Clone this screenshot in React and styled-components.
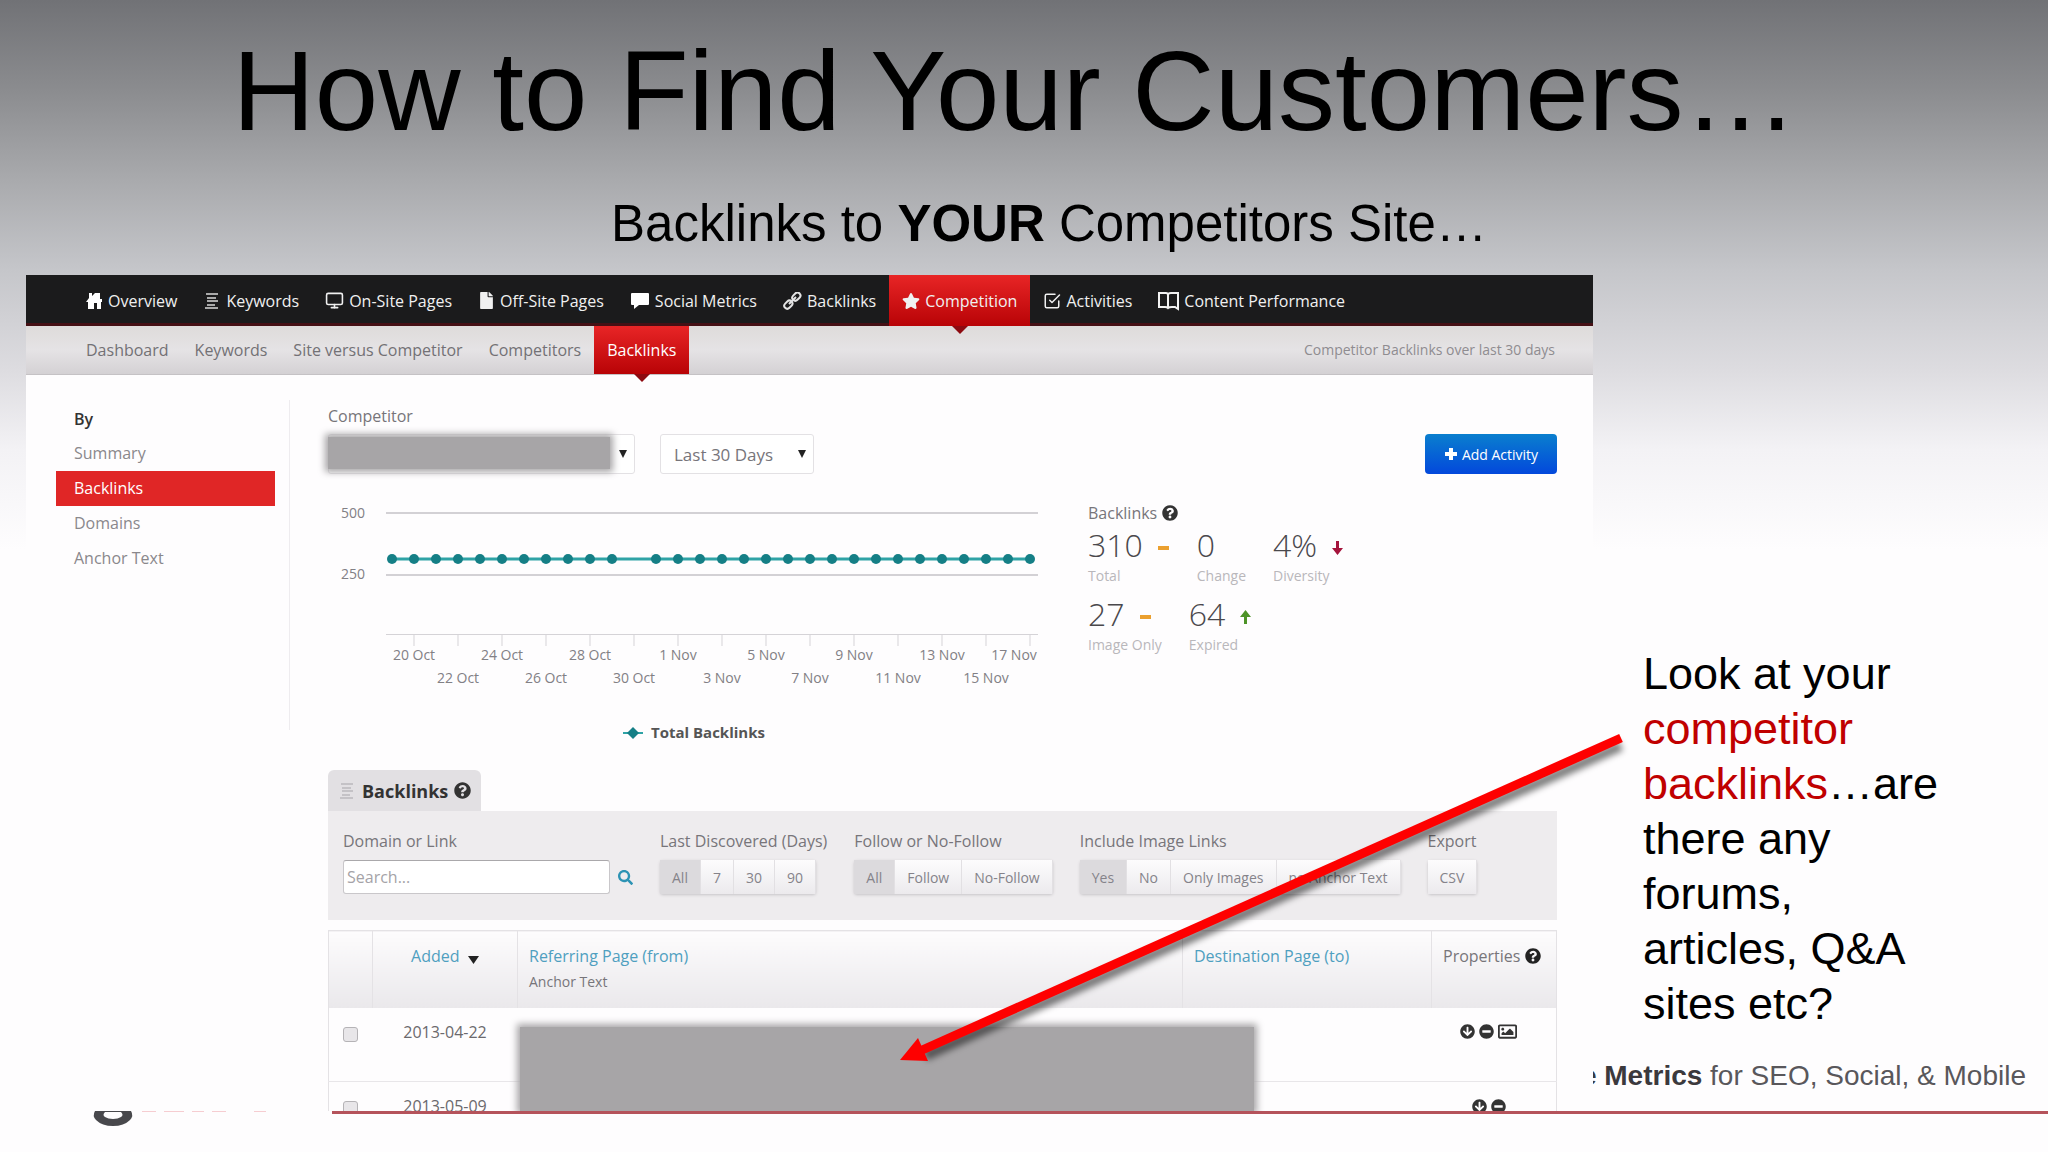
import React from "react";
import styled, { createGlobalStyle, css } from "styled-components";
import {
  FaFile,
  FaStar,
  FaSearch,
  FaQuestionCircle,
  FaArrowCircleDown,
  FaMinusCircle,
  FaRegImage,
} from "react-icons/fa";
import { FiMonitor, FiCheckSquare } from "react-icons/fi";

const NAV = [
  { label: "Overview", icon: <HouseIcon /> },
  { label: "Keywords", icon: <LinesIcon /> },
  { label: "On-Site Pages", icon: <FiMonitor size={19} strokeWidth={2} /> },
  { label: "Off-Site Pages", icon: <FaFile size={17} /> },
  { label: "Social Metrics", icon: <BubbleIcon /> },
  { label: "Backlinks", icon: <ChainIcon /> },
  { label: "Competition", icon: <FaStar size={18} />, active: true },
  { label: "Activities", icon: <FiCheckSquare size={18} /> },
  { label: "Content Performance", icon: <BookIcon /> },
];

const SUBNAV = ["Dashboard", "Keywords", "Site versus Competitor", "Competitors", "Backlinks"];
const SIDE = ["Summary", "Backlinks", "Domains", "Anchor Text"];

const FILTERS = [
  { label: "Last Discovered (Days)", options: ["All", "7", "30", "90"] },
  { label: "Follow or No-Follow", options: ["All", "Follow", "No-Follow"] },
  { label: "Include Image Links", options: ["Yes", "No", "Only Images", "no Anchor Text"] },
];

const DATES = [
  "20 Oct", "22 Oct", "24 Oct", "26 Oct", "28 Oct", "30 Oct", "1 Nov", "3 Nov",
  "5 Nov", "7 Nov", "9 Nov", "11 Nov", "13 Nov", "15 Nov", "17 Nov",
];

const TRENDS = {
  flat: { color: "#eba02f", d: "M1 6h11v4H1z" },
  down: { color: "#a5143c", d: "M5 1h3v7h4l-5.500 7L1 8h4z" },
  up: { color: "#4d9327", d: "M5 15h3V8h4L6.500 1 1 8h4z" },
};

function HouseIcon() {
  return (
    <svg width="17" height="18" viewBox="0 0 17 18" fill="#fff" aria-hidden="true">
      <path d="M3 1h3v3l3-3h5v6h2v3h-1v7h-4v-6H8v6H2v-7H0l3-4z" />
    </svg>
  );
}

function LinesIcon({ color = "#a9a9a9" }) {
  return (
    <svg width="18" height="18" viewBox="0 0 18 18" fill={color} aria-hidden="true">
      <path d="M3 1h12v2H3zM4 5h9v2H4zM4 8h11v2H4zM4 12h8v2H4zM2 15h13v2H2z" />
    </svg>
  );
}

function BubbleIcon() {
  return (
    <svg width="20" height="18" viewBox="0 0 20 18" fill="#fff" aria-hidden="true">
      <path d="M2 1h16q1 0 1 1v10q0 1-1 1h-9l-5 4v-4H2q-1 0-1-1V2q0-1 1-1z" />
    </svg>
  );
}

function ChainIcon() {
  return (
    <svg width="19" height="18" viewBox="0 0 19 18" fill="none" stroke="#e4e4e4" strokeWidth="2" aria-hidden="true">
      <rect x="9" y="2" width="9" height="6" rx="3" transform="rotate(-45 13 5)" />
      <rect x="1" y="10" width="9" height="6" rx="3" transform="rotate(-45 5 13)" />
      <path d="M6 12l7-7" />
    </svg>
  );
}

function BookIcon() {
  return (
    <svg width="21" height="20" viewBox="0 0 21 20" fill="none" stroke="#f2f2f2" strokeWidth="2" aria-hidden="true">
      <path d="M1 2h7q2 0 2 2 0-2 3-2h7v16l-3-2h-3q-3 0-4 1-1-1-3-1H1zM10 4v13" />
    </svg>
  );
}

function PlusIcon() {
  return (
    <svg width="14" height="14" viewBox="0 0 14 14" fill="#fff" aria-hidden="true">
      <path d="M5 1h4v4h4v4H9v4H5V9H1V5h4z" />
    </svg>
  );
}

function CaretIcon({ size = 8 }) {
  return (
    <svg width={size} height="8" viewBox="0 0 8 8" preserveAspectRatio="none" fill="#222" aria-hidden="true">
      <path d="M0 0h8L4 8z" />
    </svg>
  );
}

function Chart() {
  const points = [...Array(30).keys()].filter((i) => i !== 11);
  return (
    <ChartSvg viewBox="0 0 760 262" role="img" aria-label="Total Backlinks">
      <g stroke="#d3d1d5" strokeWidth="2">
        <path d="M58 23H710M58 85H710" />
      </g>
      <path d="M58 144.500H710" stroke="#d5d3d7" />
      {DATES.map((d, i) => (
        <path key={d} d={`M${86 + i * 44} 144v12`} stroke="#d5d3d7" />
      ))}
      <text x="13" y="28">500</text>
      <text x="13" y="89">250</text>
      <path d="M64 69H702" stroke="#2fa3a6" strokeWidth="3" />
      {points.map((i) => (
        <circle key={i} cx={64 + i * 22} cy="69" r="5" fill="#157f86" />
      ))}
      {DATES.map((d, i) => (
        <text key={d} x={i === 14 ? 686 : 86 + i * 44} y={i % 2 ? 193 : 170} textAnchor="middle">
          {d}
        </text>
      ))}
      <path d="M295 243h20" stroke="#2fa3a6" strokeWidth="2" />
      <path d="M305 237l6 6-6 6-6-6z" fill="#157f86" />
      <LegendText x="323" y="248">Total Backlinks</LegendText>
    </ChartSvg>
  );
}

function Stat({ value, label, trend }) {
  return (
    <StatBox>
      <StatValue>
        {value}
        {trend && (
          <svg width="13" height="16" viewBox="0 0 13 16" fill={TRENDS[trend].color} aria-label={trend}>
            <path d={TRENDS[trend].d} />
          </svg>
        )}
      </StatValue>
      <StatLabel>{label}</StatLabel>
    </StatBox>
  );
}

function Dashboard() {
  return (
    <Panel>
      <NavBar>
        {NAV.map((n) => (
          <NavItem key={n.label} href="#" $active={n.active}>
            {n.icon}
            {n.label}
          </NavItem>
        ))}
      </NavBar>
      <SubNav>
        {SUBNAV.map((s) => (
          <SubItem key={s} href="#" $active={s === "Backlinks"}>{s}</SubItem>
        ))}
        <SubNote>Competitor Backlinks over last 30 days</SubNote>
      </SubNav>
      <Columns>
        <Sidebar>
          <SideTitle>By</SideTitle>
          {SIDE.map((s) => (
            <SideLink key={s} href="#" $active={s === "Backlinks"}>{s}</SideLink>
          ))}
        </Sidebar>
        <Content>
          <FieldLabel as="label" htmlFor="competitor">Competitor</FieldLabel>
          <Controls>
            <SelectWrap $width="307px">
              <Select id="competitor" />
              <CaretIcon />
              <HiddenName />
            </SelectWrap>
            <SelectWrap $width="154px">
              <Select aria-label="Period">
                <option>Last 30 Days</option>
              </Select>
              <CaretIcon />
            </SelectWrap>
            <AddButton type="button"><PlusIcon />Add Activity</AddButton>
          </Controls>
          <Overview>
            <Chart />
            <Stats>
              <StatsTitle>Backlinks <FaQuestionCircle size={16} color="#333" /></StatsTitle>
              <StatRow>
                <Stat value="310" label="Total" trend="flat" />
                <Stat value="0" label="Change" />
                <Stat value="4%" label="Diversity" trend="down" />
              </StatRow>
              <StatRow>
                <Stat value="27" label="Image Only" trend="flat" />
                <Stat value="64" label="Expired" trend="up" />
              </StatRow>
            </Stats>
          </Overview>
          <Tab><LinesIcon color="#c4c2c6" />Backlinks <FaQuestionCircle size={17} /></Tab>
          <Filters>
            <SearchGroup>
              <FieldLabel as="label" htmlFor="search">Domain or Link</FieldLabel>
              <SearchRow>
                <SearchInput id="search" placeholder="Search..." />
                <FaSearch size={15} color="#2d93b4" />
              </SearchRow>
            </SearchGroup>
            {FILTERS.map((f) => (
              <div key={f.label}>
                <FieldLabel>{f.label}</FieldLabel>
                <ButtonGroup role="group" aria-label={f.label}>
                  {f.options.map((o, i) => (
                    <SmallButton key={o} type="button" $on={i === 0}>{o}</SmallButton>
                  ))}
                </ButtonGroup>
              </div>
            ))}
            <div>
              <FieldLabel>Export</FieldLabel>
              <ButtonGroup><SmallButton type="button">CSV</SmallButton></ButtonGroup>
            </div>
          </Filters>
          <TableClip>
            <Table>
              <colgroup>
                <col style={{ width: 44 }} />
                <col style={{ width: 145 }} />
                <col />
                <col style={{ width: 249 }} />
                <col style={{ width: 125 }} />
              </colgroup>
              <thead>
                <tr>
                  <Th aria-label="Select" />
                  <Th $center><SortLink href="#">Added</SortLink>&nbsp; <CaretIcon size={11} /></Th>
                  <Th><SortLink href="#">Referring Page (from)</SortLink><Small>Anchor Text</Small></Th>
                  <Th><SortLink href="#">Destination Page (to)</SortLink></Th>
                  <Th>Properties <FaQuestionCircle size={16} color="#222" /></Th>
                </tr>
              </thead>
              <tbody>
                <tr>
                  <Td><Check type="checkbox" aria-label="Select 2013-04-22" /></Td>
                  <Td $center>2013-04-22</Td>
                  <Td />
                  <Td />
                  <Td>
                    <Props><FaArrowCircleDown /><FaMinusCircle /><FaRegImage size={19} /></Props>
                  </Td>
                </tr>
                <tr>
                  <Td><Check type="checkbox" aria-label="Select 2013-05-09" /></Td>
                  <Td $center>2013-05-09</Td>
                  <Td />
                  <Td />
                  <Td>
                    <Props><FaArrowCircleDown /><FaMinusCircle /></Props>
                  </Td>
                </tr>
              </tbody>
            </Table>
            <HiddenLinks />
          </TableClip>
        </Content>
      </Columns>
    </Panel>
  );
}

function App() {
  return (
    <Slide>
      <GlobalStyle />
      <Title>How to Find Your Customers…</Title>
      <Subtitle>Backlinks to <b>YOUR</b> Competitors Site…</Subtitle>
      <Board>
        <Dashboard />
        <Aside>
          <Callout>
            Look at your <em>competitor backlinks</em>…are there any forums, articles, Q&amp;A sites etc?
          </Callout>
          <Tagline><span><b>e Metrics</b> for SEO, Social, &amp; Mobile</span></Tagline>
        </Aside>
      </Board>
      <Footer>
        <svg width="180" height="18" viewBox="0 0 180 18" aria-hidden="true">
          <path d="M3 0h36q3 5-1 9-6 6-17 6T4 9Q0 5 3 0z" fill="#48484c" />
          <path d="M13 1h16q3 3 0 5-3 2-8 2t-8-2q-3-2 0-5z" fill="#fefdfe" />
          <path d="M50 0h14M72 0h20M100 0h12M120 0h14M162 0h12" stroke="#f6cdd1" strokeWidth="2" />
        </svg>
        <Rule />
      </Footer>
      <Pointer viewBox="0 0 2048 1152" aria-hidden="true">
        <defs>
          <filter id="soft" x="-5%" y="-5%" width="110%" height="115%">
            <feGaussianBlur stdDeviation="3" />
          </filter>
        </defs>
        <path d="M1621 746L925 1056" stroke="#000" strokeOpacity="0.5" strokeWidth="10" filter="url(#soft)" />
        <path d="M1621 738L920 1051" stroke="#fe0000" strokeWidth="9" />
        <path d="M900 1060l18-22 10 23z" fill="#fe0000" />
      </Pointer>
    </Slide>
  );
}

export default App;

//! Styled Elements
const GlobalStyle = createGlobalStyle`
  * {
    box-sizing: border-box;
  }
  body {
    margin: 0;
    background: #fefdfe;
  }
`;

const Slide = styled.div`
  position: relative;
  min-height: 100vh;
  overflow: hidden;
  font-family: "Liberation Sans", Arial, sans-serif;
  color: #000;
  background: linear-gradient(#717276 0, #8b8c8f 90px, #a9aaad 180px, #c5c6ca 270px, #dddce0 370px, #f3f2f5 450px, #fefdfe 550px);
`;

const Title = styled.h1`
  margin: 0;
  padding: 26px 18px 0 0;
  font-size: 114px;
  line-height: 130px;
  font-weight: 400;
  text-align: center;
`;

const Subtitle = styled.h2`
  margin: 38px 0 21px;
  padding-left: 50px;
  font-size: 51px;
  line-height: 60px;
  font-weight: 400;
  text-align: center;
`;

const Board = styled.main`
  display: grid;
  grid-template-columns: minmax(0, 1fr) 455px;
  padding-left: 26px;
`;

const Panel = styled.section`
  background: #fefdfe;
  font-family: "Open Sans", "Noto Sans", sans-serif;
  font-size: 16px;
  color: #77757a;
`;

const activeTab = css`
  position: relative;
  background: linear-gradient(#e82526, #b80306);
  &::after {
    content: "";
    position: absolute;
    top: 100%;
    left: 50%;
    margin-left: -8px;
    border: 8px solid transparent;
    border-top-color: #8d0a10;
    border-bottom: 0;
  }
`;

const NavBar = styled.nav`
  display: flex;
  height: 51px;
  padding-left: 47px;
  background: #1b1b1c;
  box-shadow: inset 0 -3px #451015;
`;

const NavItem = styled.a`
  display: flex;
  align-items: center;
  gap: 5px;
  padding: 0 13px;
  font-weight: 500;
  color: #f0f0f0;
  white-space: nowrap;
  text-decoration: none;
  ${(p) => p.$active && activeTab}
`;

const SubNav = styled.nav`
  display: flex;
  height: 49px;
  padding: 0 38px 0 47px;
  background: linear-gradient(#dedbda, #e5e3e5 50%, #d4d1d4);
  border-bottom: 1px solid #c5c2c5;
`;

const SubItem = styled.a`
  display: flex;
  align-items: center;
  padding: 0 13px;
  color: #737175;
  white-space: nowrap;
  text-decoration: none;
  ${(p) => p.$active && activeTab}
  ${(p) => p.$active && "color: #fff; font-weight: 500;"}
`;

const SubNote = styled.span`
  margin-left: auto;
  font-size: 14px;
  line-height: 48px;
  color: #8f8c90;
`;

const Columns = styled.div`
  display: grid;
  grid-template-columns: 264px minmax(0, 1fr);
`;

const Sidebar = styled.aside`
  height: 330px;
  margin-top: 25px;
  padding: 3px 14px 0 30px;
  border-right: 1px solid #eeecef;
`;

const SideTitle = styled.div`
  padding-left: 18px;
  line-height: 33px;
  font-weight: 600;
  color: #333;
`;

const SideLink = styled.a`
  display: block;
  padding-left: 18px;
  line-height: 35px;
  color: ${(p) => (p.$active ? "#fff" : "#8a888c")};
  background: ${(p) => (p.$active ? "#e02626" : "none")};
  text-decoration: none;
`;

const Content = styled.div`
  padding: 29px 36px 0 38px;
`;

const FieldLabel = styled.div`
  display: block;
  line-height: 24px;
  white-space: nowrap;
`;

const Controls = styled.div`
  display: flex;
  gap: 25px;
  margin-top: 6px;
`;

const SelectWrap = styled.div`
  position: relative;
  width: ${(p) => p.$width};
  > svg {
    position: absolute;
    right: 8px;
    top: 16px;
  }
`;

const Select = styled.select`
  appearance: none;
  width: 100%;
  height: 40px;
  padding: 0 13px;
  border: 1px solid #e3e1e4;
  border-radius: 3px;
  background: #fff;
  font: inherit;
  font-size: 17px;
  color: #77757a;
`;

const HiddenName = styled.div`
  position: absolute;
  inset: 3px 25px 5px 0;
  background: #a7a5a7;
  box-shadow: 0 0 7px 3px #a7a5a7;
`;

const AddButton = styled.button`
  display: flex;
  align-items: center;
  justify-content: center;
  gap: 4px;
  width: 132px;
  height: 40px;
  margin-left: auto;
  border: 0;
  border-radius: 4px;
  background: linear-gradient(#0a7fce, #0348dc);
  font: inherit;
  font-size: 14px;
  font-weight: 500;
  color: #fff;
`;

const Overview = styled.div`
  display: grid;
  grid-template-columns: minmax(0, 1fr) 469px;
  margin: 16px 0 18px;
`;

const ChartSvg = styled.svg`
  width: 100%;
  display: block;
  font-size: 14px;
  fill: #828085;
`;

const LegendText = styled.text`
  font-weight: 700;
  font-size: 15px;
  fill: #555;
`;

const Stats = styled.div`
  padding-top: 11px;
`;

const StatsTitle = styled.div`
  display: flex;
  align-items: center;
  gap: 5px;
  line-height: 24px;
`;

const StatRow = styled.div`
  display: flex;
  gap: 27px;
  height: 69px;
`;

const StatBox = styled.div`
  color: #4a484c;
`;

const StatValue = styled.div`
  display: flex;
  align-items: center;
  gap: 14px;
  font-size: 32px;
  font-weight: 300;
  line-height: 40px;
  svg {
    margin-top: 6px;
  }
`;

const StatLabel = styled.div`
  font-size: 14px;
  line-height: 22px;
  color: #b9b7bb;
`;

const Tab = styled.div`
  display: inline-flex;
  align-items: center;
  gap: 6px;
  height: 41px;
  padding: 0 10px;
  border-radius: 6px 6px 0 0;
  background: #e2e0e3;
  font-size: 18px;
  font-weight: 700;
  color: #333;
  vertical-align: top;
`;

const Filters = styled.div`
  display: flex;
  gap: 27px;
  height: 109px;
  padding: 18px 15px 0;
  background: #eeecee;
`;

const SearchGroup = styled.div`
  width: 290px;
`;

const SearchRow = styled.div`
  display: flex;
  align-items: center;
  gap: 8px;
  margin-top: 7px;
`;

const SearchInput = styled.input`
  width: 267px;
  height: 34px;
  padding: 0 3px;
  border: 1px solid #c9c7ca;
  border-top-color: #aaa8ab;
  border-radius: 3px;
  background: #fff;
  font: inherit;
  &::placeholder {
    color: #a5a3a7;
  }
`;

const ButtonGroup = styled.div`
  display: inline-flex;
  margin-top: 7px;
  border-radius: 3px;
  box-shadow: 0 1px 3px #c6c4c7;
`;

const SmallButton = styled.button`
  height: 34px;
  padding: 0 12px;
  border: 0;
  border-right: 1px solid #e2e0e3;
  background: ${(p) => (p.$on ? "#dcdadd" : "linear-gradient(#fdfcfd, #eceaed)")};
  font: inherit;
  font-size: 14px;
  color: #85838a;
`;

// the second row runs off the bottom edge
const TableClip = styled.div`
  position: relative;
  height: 181px;
  margin-top: 10px;
  overflow: hidden;
`;

const Table = styled.table`
  width: 100%;
  table-layout: fixed;
  border-collapse: collapse;
  border: 1px solid #e4e2e5;
`;

const Th = styled.th`
  height: 77px;
  padding: 12px 11px 0;
  border-right: 1px solid #e4e2e5;
  vertical-align: top;
  font-weight: 400;
  line-height: 26px;
  white-space: nowrap;
  text-align: ${(p) => (p.$center ? "center" : "left")};
  background: linear-gradient(#fdfcfd, #eae8eb);
  svg {
    vertical-align: -2px;
  }
`;

const SortLink = styled.a`
  color: #4f9fc0;
  text-decoration: none;
`;

const Small = styled.div`
  font-size: 14px;
`;

const Td = styled.td`
  height: 74px;
  padding: 11px 14px 0;
  border-bottom: 1px solid #e8e6e9;
  vertical-align: top;
  line-height: 26px;
  color: #6b696d;
  text-align: ${(p) => (p.$center ? "center" : "left")};
`;

const Check = styled.input`
  appearance: none;
  display: block;
  width: 15px;
  height: 15px;
  margin: 8px 0 0;
  border: 1px solid #b5b3b6;
  border-radius: 3px;
  background: #e8e6e9;
`;

const Props = styled.span`
  display: flex;
  align-items: center;
  justify-content: center;
  gap: 4px;
  height: 26px;
  padding-right: 10px;
  font-size: 15px;
  color: #333;
`;

const HiddenLinks = styled.div`
  position: absolute;
  left: 192px;
  right: 303px;
  top: 97px;
  bottom: 0;
  background: #a7a5a7;
  box-shadow: 0 0 7px 3px #a7a5a7;
`;

const Aside = styled.aside`
  display: flex;
  flex-direction: column;
  min-width: 0;
  padding-top: 371px;
`;

const Callout = styled.p`
  width: 312px;
  margin: 0 0 0 50px;
  font-size: 45px;
  line-height: 55px;
  em {
    font-style: normal;
    color: #c00000;
  }
`;

const Tagline = styled.div`
  display: flex;
  justify-content: flex-end;
  margin-top: auto;
  padding: 0 22px 20px 0;
  overflow: hidden;
  font-size: 28px;
  line-height: 30px;
  white-space: nowrap;
  color: #59575b;
  b {
    color: #3b393d;
  }
`;

const Footer = styled.footer`
  display: flex;
  align-items: flex-start;
  gap: 60px;
  padding-left: 92px;
`;

const Rule = styled.hr`
  flex: 1;
  height: 3px;
  margin: 0;
  border: 0;
  background: #b5535b;
`;

const Pointer = styled.svg`
  position: absolute;
  top: 0;
  left: 0;
  width: 100%;
  pointer-events: none;
`;
